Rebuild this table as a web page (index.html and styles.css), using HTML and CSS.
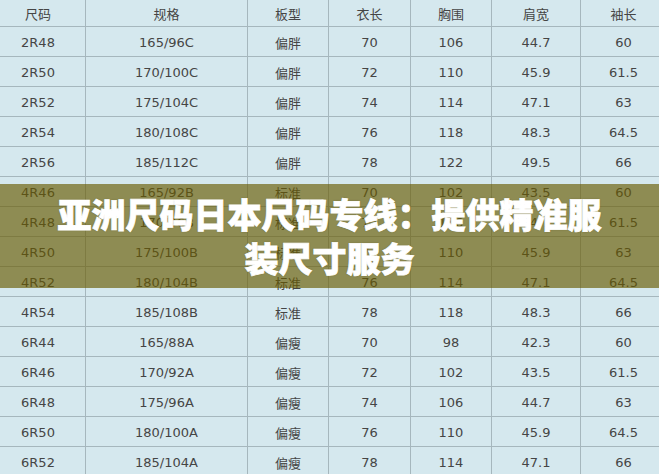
FILE: index.html
```html
<!DOCTYPE html>
<html lang="zh-CN">
<head>
<meta charset="utf-8">
<title>亚洲尺码日本尺码专线</title>
<link rel="stylesheet" href="styles.css">
</head>
<body>
<div class="page">
  <div class="sheet">
    <div class="row head"><div>尺码</div><div>规格</div><div>板型</div><div>衣长</div><div>胸围</div><div>肩宽</div><div>袖长</div></div>
    <div class="row"><div>2R48</div><div>165/96C</div><div>偏胖</div><div>70</div><div>106</div><div>44.7</div><div>60</div></div>
    <div class="row"><div>2R50</div><div>170/100C</div><div>偏胖</div><div>72</div><div>110</div><div>45.9</div><div>61.5</div></div>
    <div class="row"><div>2R52</div><div>175/104C</div><div>偏胖</div><div>74</div><div>114</div><div>47.1</div><div>63</div></div>
    <div class="row"><div>2R54</div><div>180/108C</div><div>偏胖</div><div>76</div><div>118</div><div>48.3</div><div>64.5</div></div>
    <div class="row"><div>2R56</div><div>185/112C</div><div>偏胖</div><div>78</div><div>122</div><div>49.5</div><div>66</div></div>
    <div class="row"><div>4R46</div><div>165/92B</div><div>标准</div><div>70</div><div>102</div><div>43.5</div><div>60</div></div>
    <div class="row"><div>4R48</div><div>170/96B</div><div>标准</div><div>72</div><div>106</div><div>44.7</div><div>61.5</div></div>
    <div class="row"><div>4R50</div><div>175/100B</div><div>标准</div><div>74</div><div>110</div><div>45.9</div><div>63</div></div>
    <div class="row"><div>4R52</div><div>180/104B</div><div>标准</div><div>76</div><div>114</div><div>47.1</div><div>64.5</div></div>
    <div class="row"><div>4R54</div><div>185/108B</div><div>标准</div><div>78</div><div>118</div><div>48.3</div><div>66</div></div>
    <div class="row"><div>6R44</div><div>165/88A</div><div>偏瘦</div><div>70</div><div>98</div><div>42.3</div><div>60</div></div>
    <div class="row"><div>6R46</div><div>170/92A</div><div>偏瘦</div><div>72</div><div>102</div><div>43.5</div><div>61.5</div></div>
    <div class="row"><div>6R48</div><div>175/96A</div><div>偏瘦</div><div>74</div><div>106</div><div>44.7</div><div>63</div></div>
    <div class="row"><div>6R50</div><div>180/100A</div><div>偏瘦</div><div>76</div><div>110</div><div>45.9</div><div>64.5</div></div>
    <div class="row"><div>6R52</div><div>185/104A</div><div>偏瘦</div><div>78</div><div>114</div><div>47.1</div><div>66</div></div>
  </div>
  <div class="banner">
    <h1 class="title">亚洲尺码日本尺码专线：提供精准服<br>装尺寸服务</h1>
  </div>
</div>
</body>
</html>
```
FILE: styles.css
```css
html, body {
  margin: 0;
  padding: 0;
  background: #d5e8ee;
}
body {
  width: 659px;
  height: 474px;
  overflow: hidden;
}
.page {
  position: relative;
  width: 659px;
  height: 474px;
  overflow: hidden;
}
.sheet {
  margin-left: -9px;
  width: 676px;
  font-family: "DejaVu Sans", "Noto Sans CJK SC", sans-serif;
  font-size: 13px;
  color: #454545;
}
.row {
  display: grid;
  grid-template-columns: 95px 162px 81px 82px 81px 89px 86px;
  height: 30px;
}
.row.head {
  height: 27px;
}
.row > div {
  display: flex;
  align-items: center;
  justify-content: center;
  border-right: 1px solid #a6b7bd;
  border-bottom: 1px solid #a6b7bd;
  padding-top: 1px;
}
.row.head > div {
  font-family: "Noto Sans CJK SC", sans-serif;
  padding-top: 0;
}
.banner {
  position: absolute;
  left: 0;
  top: 184px;
  width: 659px;
  height: 104px;
  background: rgba(105, 90, 0, 0.65);
  display: flex;
  align-items: center;
  justify-content: center;
}
.title {
  margin: 0;
  font-family: "Noto Sans CJK SC", sans-serif;
  font-weight: 900;
  font-size: 34px;
  line-height: 44px;
  color: #ffffff;
  text-align: center;
  -webkit-text-stroke: 0.8px #ffffff;
  text-shadow: 0 0 2px rgba(60, 50, 0, 0.4);
}
```
